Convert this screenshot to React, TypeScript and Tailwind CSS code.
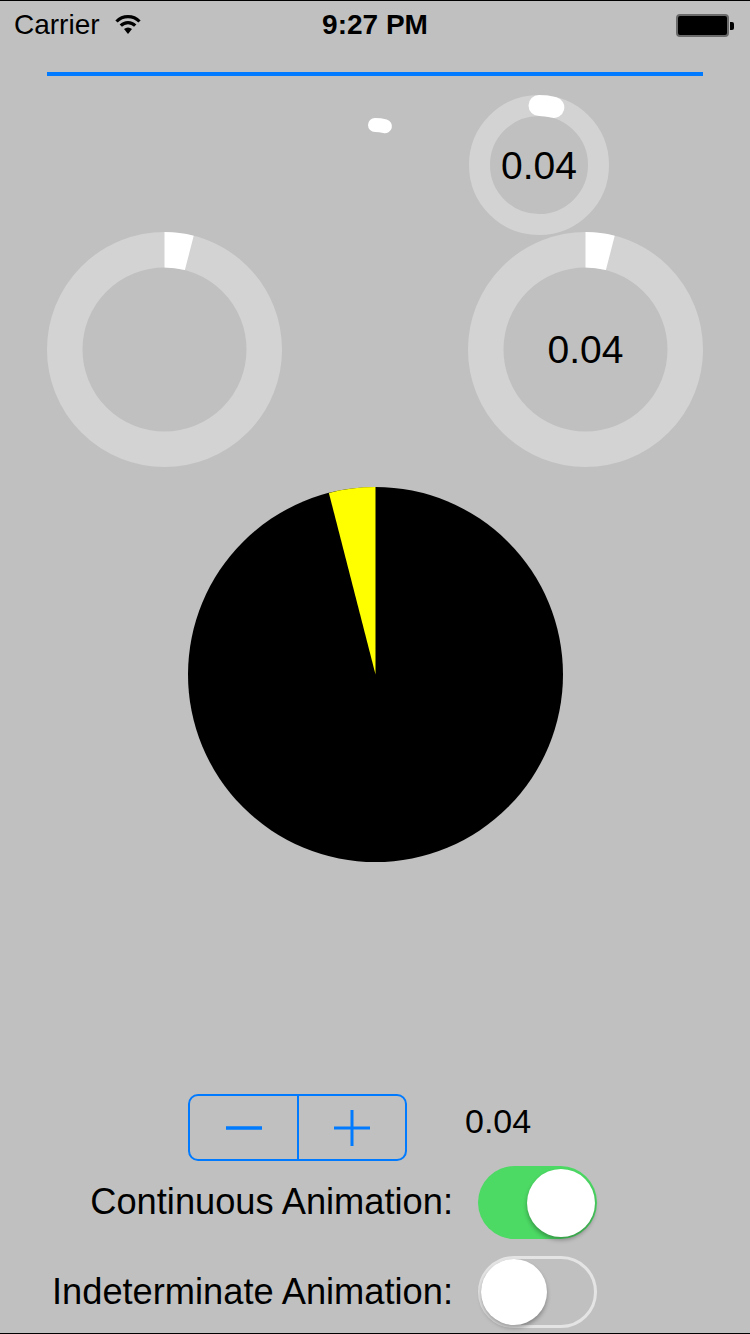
const font = { fontFamily: '"Liberation Sans", Arial, sans-serif' };

const progress = 0.04;

function polar(c: number, r: number, f: number) {
  const a = f * 2 * Math.PI;
  return { x: c + r * Math.sin(a), y: c - r * Math.cos(a) };
}

function Ring({
  size,
  width,
  cap,
  track = true,
  label,
}: {
  size: number;
  width: number;
  cap: "round" | "butt";
  track?: boolean;
  label?: string;
}) {
  const c = size / 2;
  const r = c - width / 2;
  const end = polar(c, r, progress);
  return (
    <div className="relative flex items-center justify-center" style={{ width: size, height: size }}>
      <svg width={size} height={size} className="absolute inset-0">
        {track && <circle cx={c} cy={c} r={r} fill="none" stroke="#d3d3d3" strokeWidth={width} />}
        <path
          d={`M${c} ${c - r} A${r} ${r} 0 0 1 ${end.x} ${end.y}`}
          fill="none"
          stroke="#ffffff"
          strokeWidth={width}
          strokeLinecap={cap}
        />
      </svg>
      {label && <span className="relative text-[39px] leading-none text-black">{label}</span>}
    </div>
  );
}

function Pie() {
  const c = 187.5;
  const a = progress * 2 * Math.PI;
  const x = c - c * Math.sin(a);
  const y = c - c * Math.cos(a);
  return (
    <svg width="375" height="375" className="mx-auto mt-[20px] block">
      <circle cx={c} cy={c} r={c} fill="#000" />
      <path d={`M${c} ${c} L${c} 0 A${c} ${c} 0 0 0 ${x} ${y} Z`} fill="#ffff00" />
    </svg>
  );
}

function Toggle({ on }: { on: boolean }) {
  return on ? (
    <div className="flex h-[73px] w-[119px] items-center justify-end rounded-full bg-[#4cd964] pr-[2px]">
      <div className="h-[68px] w-[68px] rounded-full bg-white shadow-[0_3px_4px_rgba(0,0,0,0.3)]" />
    </div>
  ) : (
    <div className="flex h-[72px] w-[119px] items-center rounded-full border-[3px] border-[#e4e4e4]">
      <div className="h-[66px] w-[66px] rounded-full bg-white shadow-[0_3px_4px_rgba(0,0,0,0.3)]" />
    </div>
  );
}

export default function App() {
  return (
    <div
      className="flex h-[1334px] w-[750px] flex-col overflow-hidden border-y border-black bg-[#c0c0c0] text-black"
      style={font}
    >
      {/* status bar */}
      <div className="grid h-[39px] grid-cols-[1fr_auto_1fr] items-start px-[14px]">
        <div className="flex items-start gap-[15px] pt-[10px]">
          <span className="text-[28px] leading-none">Carrier</span>
          <svg width="26" height="21" viewBox="0 0 26 21" className="mt-[3px]">
            <path d="M1.5 7.5 A16 16 0 0 1 24.5 7.5" fill="none" stroke="#000" strokeWidth="3.2" />
            <path d="M5.8 11.6 A10 10 0 0 1 20.2 11.6" fill="none" stroke="#000" strokeWidth="3.2" />
            <path d="M9 15 L13 20 L17 15 A6 6 0 0 0 9 15 Z" fill="#000" />
          </svg>
        </div>
        <span className="pt-[10px] text-[28px] font-bold leading-none">9:27 PM</span>
        <div className="flex items-center justify-end pt-[13px] pr-[2px]">
          <div className="h-[23px] w-[53px] rounded-[4px] border-[2px] border-[#6a6a6a] bg-black" />
          <div className="ml-[1px] h-[8px] w-[4px] rounded-r-[2px] bg-black" />
        </div>
      </div>

      {/* progress bar */}
      <div className="mx-[47px] mt-[32px] h-[4px] bg-[#007aff]" />

      {/* small rings */}
      <div className="ml-[305px] mt-[19px] flex gap-[24px]">
        <div className="flex h-[140px] w-[140px] items-center justify-center">
          <Ring size={94} width={14} cap="round" track={false} />
        </div>
        <Ring size={140} width={21} cap="round" label="0.04" />
      </div>

      {/* big rings */}
      <div className="-mt-[3px] flex justify-between px-[47px]">
        <Ring size={235} width={35.5} cap="butt" />
        <Ring size={235} width={35.5} cap="butt" label="0.04" />
      </div>

      <Pie />

      {/* stepper */}
      <div className="ml-[188px] mt-[232px] flex items-start">
        <div className="flex h-[67px] w-[219px] rounded-[10px] border-2 border-[#007aff]">
          <button className="flex w-[107px] items-center justify-center">
            <svg width="36" height="36" viewBox="0 0 36 36">
              <line x1="0" y1="18" x2="36" y2="18" stroke="#007aff" strokeWidth="3.5" />
            </svg>
          </button>
          <div className="w-[2px] bg-[#007aff]" />
          <button className="flex flex-1 items-center justify-center">
            <svg width="36" height="36" viewBox="0 0 36 36">
              <line x1="0" y1="18" x2="36" y2="18" stroke="#007aff" strokeWidth="3" />
              <line x1="18" y1="0" x2="18" y2="36" stroke="#007aff" strokeWidth="3" />
            </svg>
          </button>
        </div>
        <span className="ml-[58px] mt-[10px] text-[34px] leading-none">0.04</span>
      </div>

      {/* switches */}
      <div className="mt-[5px] flex items-center gap-[25px]">
        <span className="w-[453px] text-right text-[36.25px] leading-none">Continuous Animation:</span>
        <Toggle on />
      </div>
      <div className="mt-[17px] flex items-center gap-[25px]">
        <span className="w-[453px] text-right text-[36.25px] leading-none">Indeterminate Animation:</span>
        <Toggle on={false} />
      </div>
    </div>
  );
}
